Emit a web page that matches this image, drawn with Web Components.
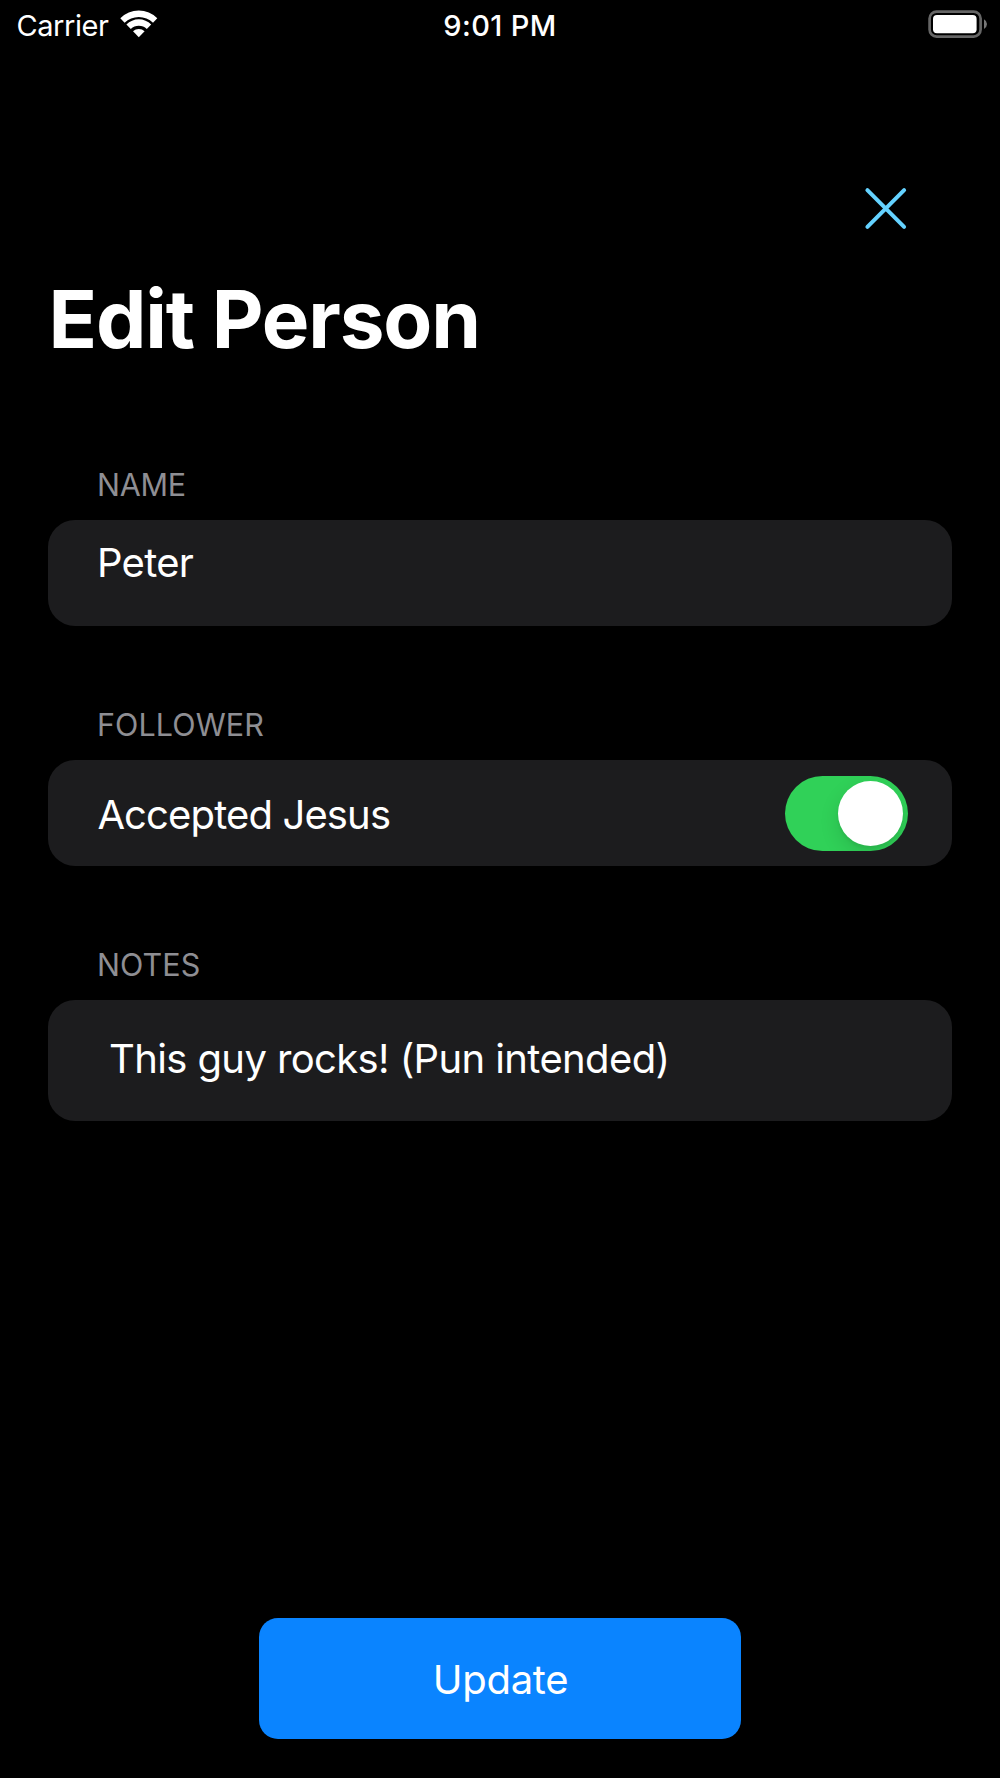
<!DOCTYPE html>
<html lang="en">
<head>
<meta charset="utf-8">
<title>Edit Person</title>
<style>
  html, body { margin: 0; background: #000; }
  body { font-family: Inter, "Liberation Sans", sans-serif; color: #fff; }
</style>
</head>
<body>
<edit-screen>
  <status-bar slot="status" carrier="Carrier" time="9:01 PM"></status-bar>
  <close-button slot="close"></close-button>
  <page-title slot="title">Edit Person</page-title>
  <form-section label="NAME" style="--label-spacing:-.3px">
    <form-row align="top" style="--spacing:-.7px">Peter</form-row>
  </form-section>
  <form-section label="FOLLOWER" style="--label-spacing:.09px">
    <form-row style="--spacing:-.868px;--nudge:3px;--inset:49px">Accepted Jesus<toggle-switch slot="end"></toggle-switch></form-row>
  </form-section>
  <form-section label="NOTES" style="--label-spacing:.09px">
    <form-row style="--spacing:-.615px;--height:121px;--inset:60.6px;--lift:5px">This guy rocks! (Pun intended)</form-row>
  </form-section>
  <primary-button slot="action">Update</primary-button>
</edit-screen>
<script>
function define(name, html) {
  customElements.define(name, class extends HTMLElement {
    connectedCallback() {
      if (this.shadowRoot) return;
      const root = this.attachShadow({ mode: 'open' });
      root.innerHTML = html;
      root.querySelectorAll('[data-attr]').forEach(el => {
        el.textContent = this.getAttribute(el.dataset.attr) || '';
      });
    }
  });
}

define('edit-screen', `
  <style>
    :host { display: flex; flex-direction: column; box-sizing: border-box; width: 1000px; height: 1778px; background: #000; overflow: hidden; }
    .close { display: flex; justify-content: flex-end; padding: 136px 92px 0 0; }
    .title { padding: 40px 48.5px 0; }
    .form { display: flex; flex-direction: column; gap: 78px; padding: 96px 48.5px 0 48.4px; }
    .action { display: flex; justify-content: center; margin-top: auto; padding-bottom: 39px; }
  </style>
  <slot name="status"></slot>
  <div class="close"><slot name="close"></slot></div>
  <div class="title"><slot name="title"></slot></div>
  <div class="form"><slot></slot></div>
  <div class="action"><slot name="action"></slot></div>`);

define('status-bar', `
  <style>
    :host { display: grid; grid-template-columns: 1fr auto 1fr; align-items: center; height: 50px; flex: none; font-size: 29px; line-height: 50px; white-space: nowrap; }
    .left { display: flex; align-items: center; padding-left: 16.5px; letter-spacing: -.45px; }
    .left span, .time { padding-top: 1px; line-height: 49px; }
    .time { font-weight: 500; letter-spacing: .391px; }
    .right { display: flex; justify-content: flex-end; padding-right: 12px; }
    svg { display: block; }
    .wifi { margin-left: 10.2px; }
  </style>
  <div class="left"><span data-attr="carrier"></span>
    <svg class="wifi" width="40" height="50" viewBox="0 0 40 50" fill="#fff">
      <path d="M1.3 18.2A26.2 26.2 0 0 1 38.3 18.2L34 22.8A20.3 20.3 0 0 0 5.6 22.8Z"/>
      <path d="M7.4 24.5A17.5 17.5 0 0 1 32.2 24.5L27.8 29A11.5 11.5 0 0 0 11.8 29Z"/>
      <path d="M14 31.2A8.4 8.4 0 0 1 25.6 31.2L19.8 37.2Z"/>
    </svg>
  </div>
  <span class="time" data-attr="time"></span>
  <div class="right">
    <svg width="60" height="50" viewBox="928 0 60 50">
      <rect x="929.6" y="11.6" width="51" height="25" rx="7" fill="none" stroke="#666" stroke-width="2.7"/>
      <rect x="933" y="15" width="43.6" height="18.3" rx="4" fill="#fff"/>
      <path d="M984 19.3Q987 21 987 24T984 28.9Z" fill="#777"/>
    </svg>
  </div>`);

define('close-button', `
  <style>:host { display: block; } svg { display: block; }</style>
  <svg width="44" height="44" viewBox="0 0 44 44" fill="none" stroke="#64d2ff" stroke-width="4" stroke-linecap="round">
    <path d="M3.4 4.1L40.1 40.8M40.1 4.1L3.4 40.8"/>
  </svg>`);

define('page-title', `
  <style>
    :host { display: block; }
    h1 { margin: 0; font-size: 80px; font-weight: 700; line-height: 98px; letter-spacing: -1.15px; }
  </style>
  <h1><slot></slot></h1>`);

define('form-section', `
  <style>
    :host { display: block; }
    .label { padding-left: 48.6px; margin-bottom: 15px; font-size: 30.5px; line-height: 41px; letter-spacing: var(--label-spacing, 0); color: #8e8e93; }
    .card { background: #1c1c1e; border-radius: 27px; }
  </style>
  <div class="label" data-attr="label"></div>
  <div class="card"><slot></slot></div>`);

define('form-row', `
  <style>
    :host { display: flex; align-items: center; box-sizing: border-box; height: var(--height, 106px); padding: var(--nudge, 0) 43.5px var(--lift, 0) var(--inset, 48.6px); font-size: 40px; line-height: 49px; letter-spacing: var(--spacing, 0); }
    :host([align="top"]) { align-items: flex-start; padding-top: 18px; }
    .text { flex: 1; }
  </style>
  <span class="text"><slot></slot></span><slot name="end"></slot>`);

define('toggle-switch', `
  <style>
    :host { display: flex; align-items: center; justify-content: flex-end; box-sizing: border-box; width: 123px; height: 75px; padding: 0 5px; margin-top: -2px; border-radius: 38px; background: #30d158; overflow: hidden; }
    .knob { width: 65.5px; height: 65.5px; border-radius: 50%; background: #fff; box-shadow: 0 8px 20px rgba(0,0,0,.12), 0 3px 3px rgba(0,0,0,.05); }
  </style>
  <div class="knob"></div>`);

define('primary-button', `
  <style>
    :host { display: block; }
    button { display: block; width: 482.5px; height: 121px; margin: 0; padding: 2px 0 0 1px; border: 0; border-radius: 19px; background: #0a84ff; color: #fff; font: 400 40px/49px Inter, "Liberation Sans", sans-serif; letter-spacing: -.281px; }
  </style>
  <button type="button"><slot></slot></button>`);
</script>
</body>
</html>
